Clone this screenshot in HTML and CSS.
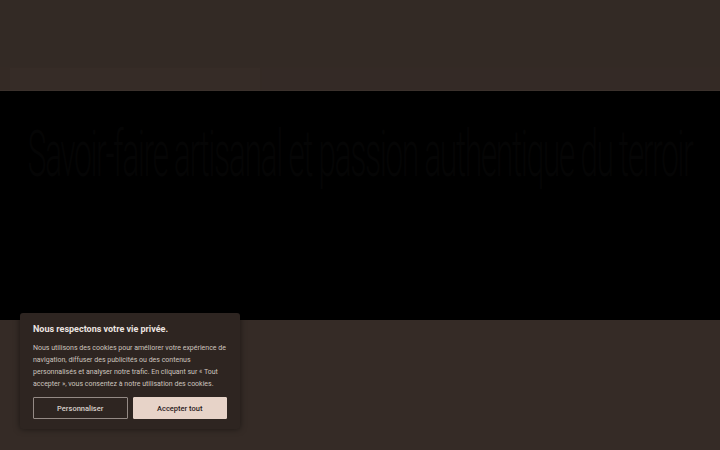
FILE: index.html
```html
<!DOCTYPE html>
<html lang="fr">
<head>
<meta charset="utf-8">
<title>Vie privée</title>
<link rel="stylesheet" href="styles.css">
</head>
<body>
<header class="site-header">
  <div class="header-top"></div>
  <div class="header-bar">
    <div class="bar-left"></div>
    <div class="bar-right"></div>
  </div>
</header>
<section class="hero">
  <h1 class="hero-title">Savoir-faire artisanal et passion authentique du terroir</h1>
</section>
<main class="content"></main>
<div class="cookie-box">
  <p class="cookie-title">Nous respectons votre vie privée.</p>
  <p class="cookie-text">Nous utilisons des cookies pour améliorer votre expérience de navigation, diffuser des publicités ou des contenus personnalisés et analyser notre trafic. En cliquant sur « Tout accepter », vous consentez à notre utilisation des cookies.</p>
  <div class="cookie-actions">
    <button class="btn btn-outline">Personnaliser</button>
    <button class="btn btn-fill">Accepter tout</button>
  </div>
</div>
</body>
</html>
```
FILE: styles.css
```css
html, body {
  margin: 0;
  padding: 0;
}
body {
  background: #352b26;
  font-family: Roboto, "Liberation Sans", sans-serif;
  height: 450px;
  overflow: hidden;
}
.site-header {
  background: #332a25;
  height: 91px;
  display: flex;
  flex-direction: column;
}
.header-top {
  height: 67px;
}
.header-bar {
  flex: 1;
  display: flex;
  gap: 2px;
  padding: 1px 10px 0;
  background: #342a25;
  border-bottom: 1px solid #3b312c;
}
.bar-left {
  width: 250px;
  background: #362c27;
}
.bar-right {
  flex: 1;
  background: #342a26;
}
.hero {
  background: #000;
  height: 229px;
  display: flex;
  justify-content: center;
  padding-top: 26px;
  box-sizing: border-box;
  overflow: hidden;
}
.hero-title {
  margin: 0;
  color: #050505;
  font-weight: 300;
  font-size: 64px;
  letter-spacing: -3px;
  white-space: nowrap;
  transform: scaleX(0.5);
  transform-origin: center top;
}
.content {
  height: 130px;
}
.cookie-box {
  position: absolute;
  left: 20px;
  top: 313px;
  width: 220px;
  box-sizing: border-box;
  padding: 10px 13px 10px;
  background: #2e2521;
  border-radius: 3px;
  box-shadow: 0 0 6px rgba(0, 0, 0, 0.5);
}
.cookie-title {
  margin: 0 0 7px;
  color: #ece4e0;
  font-weight: 700;
  font-size: 9px;
  line-height: 12px;
}
.cookie-text {
  margin: 0 0 7px;
  color: #cdc4bf;
  font-size: 7px;
  line-height: 12px;
}
.cookie-actions {
  display: flex;
  gap: 5px;
}
.btn {
  flex: 1;
  height: 22px;
  font-family: Roboto, "Liberation Sans", sans-serif;
  font-size: 7.5px;
  font-weight: 500;
  border-radius: 1px;
  padding: 0;
}
.btn-outline {
  background: #2e2521;
  color: #d9d0cb;
  border: 1.5px solid #948a85;
}
.btn-fill {
  background: #e7d3c8;
  color: #2a201c;
  border: 1.5px solid #e7d3c8;
}
```
